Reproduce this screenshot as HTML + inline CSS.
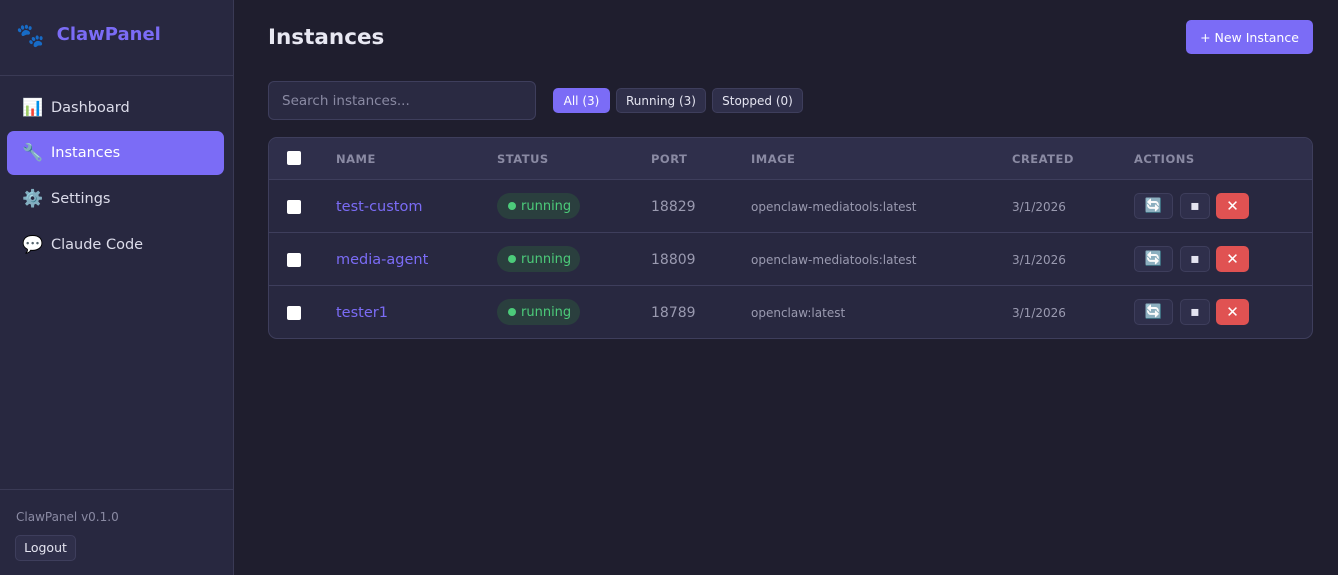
<!DOCTYPE html>
<html><head><meta charset="utf-8"><style>
*{box-sizing:border-box;margin:0;padding:0}
body{width:1338px;height:575px;background:#1f1e2e;font-family:"DejaVu Sans","Liberation Sans",sans-serif;color:#e4e4f0;position:relative;overflow:hidden}
.side{position:absolute;left:0;top:0;width:234px;height:575px;background:#282840;border-right:1px solid #3a3a55}
.logo{position:absolute;left:16px;top:22px;font-size:18px;font-weight:bold;color:#7b6cf6;line-height:26px}
.logo span{color:#2f7fd6;margin-right:12px;font-size:23px;vertical-align:-3px}
.hr1{position:absolute;left:0;top:75px;width:233px;border-top:1px solid #3a3a55}
.nav{position:absolute;left:7px;width:217px;height:44px;border-radius:7px;font-size:14.5px;padding-left:15px;line-height:44px;color:#dcdcea}
.nav i{font-style:normal;display:inline-block;width:29px;font-size:17px;vertical-align:-1px}
.act{background:#7b6cf6;color:#fff}
.hr2{position:absolute;left:0;top:489px;width:233px;border-top:1px solid #3a3a55}
.ver{position:absolute;left:16px;top:510px;font-size:12px;color:#8a8aa3}
.logout{position:absolute;left:15px;top:535px;width:61px;height:26px;border:1px solid #3e3e5c;background:#2f2f4a;border-radius:5px;font-size:12.5px;color:#e4e4f0;text-align:center;line-height:24px}
h1{position:absolute;left:268px;top:25px;font-size:21.5px;font-weight:bold;color:#e8e8f2}
.new{position:absolute;left:1186px;top:20px;width:127px;height:34px;background:#7b6cf6;border-radius:5px;color:#fff;font-size:12.5px;text-align:center;line-height:35px}
.search{position:absolute;left:268px;top:81px;width:268px;height:39px;border:1px solid #3e3e5c;background:#2a2a42;border-radius:6px;font-size:13.5px;color:#8a8aa3;padding-left:13px;line-height:38px}
.f{position:absolute;top:88px;height:25px;border:1px solid #3e3e5c;background:#2f2f4a;border-radius:5px;font-size:12px;line-height:24px;text-align:center;color:#e4e4f0}
.f.on{background:#7b6cf6;border-color:#7b6cf6;color:#fff}
.tbl{position:absolute;left:268px;top:137px;width:1045px;height:202px;border:1px solid #3e3e5c;border-radius:9px;background:#282840;overflow:hidden}
.th{position:absolute;left:0;top:0;width:100%;height:42px;background:#2f2f4b;border-bottom:1px solid #3e3e5c}
.row{position:absolute;left:0;width:100%;height:53px;border-bottom:1px solid #3e3e5c}
.c{position:absolute;top:0;line-height:42px;white-space:nowrap}
.hd{font-size:11.5px;font-weight:bold;color:#8a8aa3;letter-spacing:0.5px}
.cb{position:absolute;left:18px;width:14px;height:14px;background:#fff;border-radius:2px}
.row .c{line-height:54px}
.nm{color:#7b6cf6;font-size:14.5px}
.pill{position:absolute;left:228px;top:13px;width:83px;height:26px;background:#2a3f3e;border-radius:13px;color:#4ccb7a;font-size:13px;line-height:27px;padding-left:24px}
.pill:before{content:"";position:absolute;left:11px;top:9px;width:8px;height:8px;border-radius:50%;background:#4ccb7a}
.port{color:#9a9ab0;font-size:14px}
.img,.dt{color:#9a9ab0;font-size:12px}
.b{position:absolute;top:13px;height:26px;border-radius:5px;border:1px solid #3e3e5c;background:#2f2f4b;text-align:center;line-height:24px;font-size:14px}
.x{background:#e05252;border-color:#e05252;color:#fff;font-size:15px}
</style></head><body>
<div class="side">
<div class="logo"><span>🐾</span>ClawPanel</div>
<div class="hr1"></div>
<div class="nav" style="top:86px"><i>📊</i>Dashboard</div>
<div class="nav act" style="top:131px"><i>🔧</i>Instances</div>
<div class="nav" style="top:177px"><i>⚙️</i>Settings</div>
<div class="nav" style="top:223px"><i>💬</i>Claude Code</div>
<div class="hr2"></div>
<div class="ver">ClawPanel v0.1.0</div>
<div class="logout">Logout</div>
</div>
<h1>Instances</h1>
<div class="new">+ New Instance</div>
<div class="search">Search instances...</div>
<div class="f on" style="left:553px;width:57px">All (3)</div>
<div class="f" style="left:616px;width:90px">Running (3)</div>
<div class="f" style="left:712px;width:91px">Stopped (0)</div>
<div class="tbl">
<div class="th">
<div class="cb" style="top:13px"></div>
<div class="c hd" style="left:67px">NAME</div>
<div class="c hd" style="left:228px">STATUS</div>
<div class="c hd" style="left:382px">PORT</div>
<div class="c hd" style="left:482px">IMAGE</div>
<div class="c hd" style="left:743px">CREATED</div>
<div class="c hd" style="left:865px">ACTIONS</div>
</div>
<div class="row" style="top:42px">
<div class="cb" style="top:20px"></div>
<div class="c nm" style="left:67px">test-custom</div>
<div class="pill">running</div>
<div class="c port" style="left:382px">18829</div>
<div class="c img" style="left:482px">openclaw-mediatools:latest</div>
<div class="c dt" style="left:743px">3/1/2026</div>
<div class="b" style="left:865px;width:39px">🔄</div><div class="b" style="left:911px;width:30px">▪</div><div class="b x" style="left:947px;width:33px">✕</div>
</div>
<div class="row" style="top:95px">
<div class="cb" style="top:20px"></div>
<div class="c nm" style="left:67px">media-agent</div>
<div class="pill">running</div>
<div class="c port" style="left:382px">18809</div>
<div class="c img" style="left:482px">openclaw-mediatools:latest</div>
<div class="c dt" style="left:743px">3/1/2026</div>
<div class="b" style="left:865px;width:39px">🔄</div><div class="b" style="left:911px;width:30px">▪</div><div class="b x" style="left:947px;width:33px">✕</div>
</div>
<div class="row" style="top:148px;border-bottom:none">
<div class="cb" style="top:20px"></div>
<div class="c nm" style="left:67px">tester1</div>
<div class="pill">running</div>
<div class="c port" style="left:382px">18789</div>
<div class="c img" style="left:482px">openclaw:latest</div>
<div class="c dt" style="left:743px">3/1/2026</div>
<div class="b" style="left:865px;width:39px">🔄</div><div class="b" style="left:911px;width:30px">▪</div><div class="b x" style="left:947px;width:33px">✕</div>
</div>
</div>
</body></html>
